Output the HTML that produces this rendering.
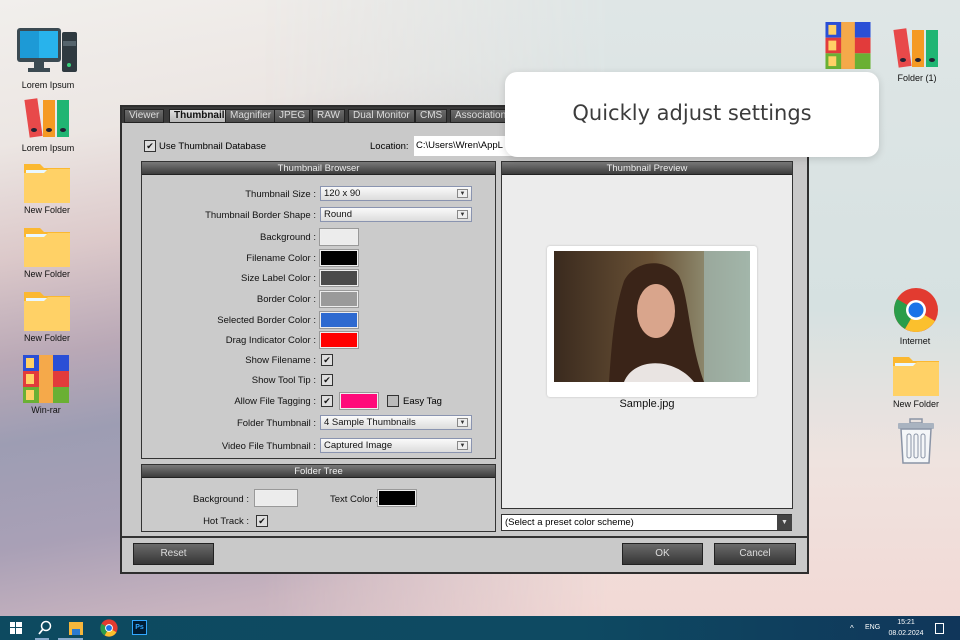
<!DOCTYPE html>
<html><head><meta charset="utf-8"><style>
*{margin:0;padding:0;box-sizing:border-box}
body{width:960px;height:640px;overflow:hidden;position:relative;font-family:"Liberation Sans",Arial,sans-serif;
background:linear-gradient(170deg,#f1efec 0%,#ece6e3 18%,#dcc9ca 32%,#b9a8b6 45%,#9d9db3 55%,#a9a0b6 68%,#c9b4bf 80%,#dcc6ca 100%);}
.bgr{position:absolute;right:0;top:0;width:700px;height:616px;background:linear-gradient(180deg,#dfe6e6 0%,#d6e1e1 50%,#efe3df 75%,#f2d9d5 100%);
-webkit-mask-image:linear-gradient(90deg,transparent 0%,rgba(0,0,0,.5) 25%,#000 50%);mask-image:linear-gradient(90deg,transparent 0%,rgba(0,0,0,.5) 25%,#000 50%);}
.a{position:absolute}
.lbl{position:absolute;font-size:9px;color:#111;text-align:center;width:80px}
.dlg{position:absolute;left:120px;top:105px;width:689px;height:469px;background:#c9c9c9;border:2px solid #2e2e2e}
.tabs{position:absolute;left:0;top:0;width:100%;height:16px;background:#3a3a3a}
.tab{position:absolute;top:2px;height:14px;font-size:10px;color:#ddd;background:linear-gradient(#6a6a6a,#4a4a4a);border:1px solid #222;padding:0 4px;line-height:12px}
.tab.on{background:linear-gradient(#e0e0e0,#b8b8b8);color:#111;font-weight:bold}
.grp{position:absolute;border:1px solid #333;background:#cbcbcb}
.gh{position:absolute;left:0;top:0;right:0;height:13px;background:linear-gradient(#7a7a7a,#3c3c3c);color:#eee;font-size:9.5px;text-align:center;line-height:13px;border-bottom:1px solid #222}
.r{position:absolute;font-size:9.5px;color:#111;text-align:right;width:200px}
.sw{position:absolute;width:38px;height:16px;border:1px solid #eee;outline:1px solid #999}
.sel{position:absolute;height:15px;background:linear-gradient(#fafafa,#dcdcdc);border:1px solid #8a94b0;font-size:9.5px;line-height:13px;padding-left:3px;color:#111}
.sel i{position:absolute;right:3px;top:2px;width:11px;height:9px;border:1px solid #888;background:#eee;font-style:normal;font-size:6px;line-height:8px;text-align:center;color:#333}
.cb{position:absolute;width:12px;height:12px;border:1px solid #333;background:#ddd;font-size:9px;line-height:10px;text-align:center;color:#111}
.btn{position:absolute;height:22px;background:linear-gradient(#6a6a6a,#363636);border:1px solid #222;color:#ddd;font-size:10px;text-align:center;line-height:20px}
</style></head><body>
<div class="bgr"></div>
<svg class="a" style="left:16px;top:27px" width="62" height="47" viewBox="0 0 62 47"><rect x="1" y="1" width="44" height="34" rx="3" fill="#3b4a52"/><rect x="4" y="4" width="19" height="27" fill="#1d9ad6"/><rect x="23" y="4" width="19" height="27" fill="#28b3ec"/><rect x="18" y="35" width="10" height="7" fill="#3b4a52"/><rect x="12" y="41" width="22" height="4" fill="#3b4a52"/><rect x="46" y="5" width="15" height="40" rx="2" fill="#2f3a40"/><rect x="47" y="14" width="13" height="5" fill="#55646c"/><circle cx="53" cy="38" r="2" fill="#3ad07a"/></svg>
<div class="lbl" style="left:8px;top:80px">Lorem Ipsum</div>
<svg class="a" style="left:24px;top:97px" width="48" height="42" viewBox="0 0 48 42"><rect x="3" y="2" width="13" height="38" fill="#e8494a" transform="rotate(-8 9 21)"/><rect x="19" y="3" width="12" height="37" fill="#f59a23"/><rect x="33" y="3" width="12" height="37" fill="#20b573"/><ellipse cx="10" cy="33" rx="3" ry="2" fill="#223"/><ellipse cx="25" cy="33" rx="3" ry="2" fill="#223"/><ellipse cx="39" cy="33" rx="3" ry="2" fill="#223"/></svg>
<div class="lbl" style="left:8px;top:143px">Lorem Ipsum</div>
<svg class="a" style="left:24px;top:160px" width="46" height="43" viewBox="0 0 46 43"><path d="M0 4h16l4 4h26v35H0z" fill="#fbb830"/><rect x="2" y="10" width="42" height="5" fill="#e9f8ff"/><path d="M0 13h20l4-4h22v34H0z" fill="#ffd166"/></svg>
<div class="lbl" style="left:7px;top:205px">New Folder</div>
<svg class="a" style="left:24px;top:224px" width="46" height="43" viewBox="0 0 46 43"><path d="M0 4h16l4 4h26v35H0z" fill="#fbb830"/><rect x="2" y="10" width="42" height="5" fill="#e9f8ff"/><path d="M0 13h20l4-4h22v34H0z" fill="#ffd166"/></svg>
<div class="lbl" style="left:7px;top:269px">New Folder</div>
<svg class="a" style="left:24px;top:288px" width="46" height="43" viewBox="0 0 46 43"><path d="M0 4h16l4 4h26v35H0z" fill="#fbb830"/><rect x="2" y="10" width="42" height="5" fill="#e9f8ff"/><path d="M0 13h20l4-4h22v34H0z" fill="#ffd166"/></svg>
<div class="lbl" style="left:7px;top:333px">New Folder</div>
<svg class="a" style="left:23px;top:355px" width="46" height="48" viewBox="0 0 46 48"><rect width="46" height="16" fill="#2a4fd6"/><rect y="16" width="46" height="16" fill="#e23b3b"/><rect y="32" width="46" height="16" fill="#6ab034"/><rect x="16" width="14" height="48" fill="#f5a94a"/><rect x="3" y="3" width="8" height="10" fill="#ffd166"/><rect x="3" y="19" width="8" height="10" fill="#ffd166"/><rect x="3" y="35" width="8" height="10" fill="#ffd166"/></svg>
<div class="lbl" style="left:6px;top:405px">Win-rar</div>
<svg class="a" style="left:825px;top:22px" width="46" height="47" viewBox="0 0 46 48"><rect width="46" height="16" fill="#2a4fd6"/><rect y="16" width="46" height="16" fill="#e23b3b"/><rect y="32" width="46" height="16" fill="#6ab034"/><rect x="16" width="14" height="48" fill="#f5a94a"/><rect x="3" y="3" width="8" height="10" fill="#ffd166"/><rect x="3" y="19" width="8" height="10" fill="#ffd166"/><rect x="3" y="35" width="8" height="10" fill="#ffd166"/></svg>
<svg class="a" style="left:893px;top:27px" width="48" height="42" viewBox="0 0 48 42"><rect x="3" y="2" width="13" height="38" fill="#e8494a" transform="rotate(-8 9 21)"/><rect x="19" y="3" width="12" height="37" fill="#f59a23"/><rect x="33" y="3" width="12" height="37" fill="#20b573"/><ellipse cx="10" cy="33" rx="3" ry="2" fill="#223"/><ellipse cx="25" cy="33" rx="3" ry="2" fill="#223"/><ellipse cx="39" cy="33" rx="3" ry="2" fill="#223"/></svg>
<div class="lbl" style="left:877px;top:73px">Folder (1)</div>
<svg class="a" style="left:893px;top:287px" width="46" height="46" viewBox="0 0 46 46"><circle cx="23" cy="23" r="22" fill="#e23b30"/><path d="M23 23L4 12A22 22 0 0 0 12 42z" fill="#2a9d4a"/><path d="M23 23L12 42A22 22 0 0 0 42 34z" fill="#fbc02d"/><circle cx="23" cy="23" r="10" fill="#fff"/><circle cx="23" cy="23" r="7.5" fill="#1a73e8"/></svg>
<div class="lbl" style="left:875px;top:336px">Internet</div>
<svg class="a" style="left:893px;top:353px" width="46" height="43" viewBox="0 0 46 43"><path d="M0 4h16l4 4h26v35H0z" fill="#fbb830"/><rect x="2" y="10" width="42" height="5" fill="#e9f8ff"/><path d="M0 13h20l4-4h22v34H0z" fill="#ffd166"/></svg>
<div class="lbl" style="left:876px;top:399px">New Folder</div>
<svg class="a" style="left:897px;top:418px" width="38" height="46" viewBox="0 0 38 46"><rect x="13" y="1" width="12" height="4" fill="none" stroke="#8a94a6" stroke-width="1.5"/><rect x="1" y="5" width="36" height="6" rx="1" fill="#a9b3c0"/><path d="M4 11h30l-2 34H6z" fill="#f4f6f8" stroke="#8a94a6" stroke-width="1.5"/><rect x="10" y="16" width="4" height="24" rx="2" fill="none" stroke="#8a94a6"/><rect x="17" y="16" width="4" height="24" rx="2" fill="none" stroke="#8a94a6"/><rect x="24" y="16" width="4" height="24" rx="2" fill="none" stroke="#8a94a6"/></svg>

<div class="dlg">
<div class="tabs">
<div class="tab" style="left:2px">Viewer</div>
<div class="tab on" style="left:47px">Thumbnail</div>
<div class="tab" style="left:103px">Magnifier</div>
<div class="tab" style="left:152px">JPEG</div>
<div class="tab" style="left:190px">RAW</div>
<div class="tab" style="left:226px">Dual Monitor</div>
<div class="tab" style="left:293px">CMS</div>
<div class="tab" style="left:328px">Association</div>
</div>
<div class="cb" style="left:22px;top:33px">✔</div>
<div class="a" style="left:37px;top:34px;font-size:9.5px">Use Thumbnail Database</div>
<div class="a" style="left:248px;top:34px;font-size:9.5px">Location:</div>
<div class="a" style="left:292px;top:29px;width:100px;height:20px;background:#fff;font-size:9.5px;padding:4px 2px">C:\Users\Wren\AppL</div>

<div class="grp" style="left:19px;top:54px;width:355px;height:298px"><div class="gh">Thumbnail Browser</div></div>
<div class="grp" style="left:19px;top:357px;width:355px;height:68px"><div class="gh">Folder Tree</div></div>
<div class="grp" style="left:379px;top:54px;width:292px;height:348px;background:#ececec"><div class="gh">Thumbnail Preview</div></div>

<div class="r" style="left:-6px;top:82px">Thumbnail Size :</div>
<div class="sel" style="left:198px;top:79px;width:152px">120 x 90<i>▼</i></div>
<div class="r" style="left:-6px;top:103px">Thumbnail Border Shape :</div>
<div class="sel" style="left:198px;top:100px;width:152px">Round<i>▼</i></div>
<div class="r" style="left:-6px;top:125px">Background :</div><div class="sw" style="left:198px;top:122px;background:#ececec"></div>
<div class="r" style="left:-6px;top:146px">Filename Color :</div><div class="sw" style="left:198px;top:143px;background:#000"></div>
<div class="r" style="left:-6px;top:166px">Size Label Color :</div><div class="sw" style="left:198px;top:163px;background:#4a4a4a"></div>
<div class="r" style="left:-6px;top:187px">Border Color :</div><div class="sw" style="left:198px;top:184px;background:#9a9a9a"></div>
<div class="r" style="left:-6px;top:208px">Selected Border Color :</div><div class="sw" style="left:198px;top:205px;background:#2e6ad0"></div>
<div class="r" style="left:-6px;top:228px">Drag Indicator Color :</div><div class="sw" style="left:198px;top:225px;background:#ff0000"></div>
<div class="r" style="left:-6px;top:248px">Show Filename :</div><div class="cb" style="left:199px;top:247px">✔</div>
<div class="r" style="left:-6px;top:268px">Show Tool Tip :</div><div class="cb" style="left:199px;top:267px">✔</div>
<div class="r" style="left:-6px;top:289px">Allow File Tagging :</div><div class="cb" style="left:199px;top:288px">✔</div>
<div class="sw" style="left:218px;top:286px;background:#ff0a7a"></div>
<div class="cb" style="left:265px;top:288px;background:#bbb"></div>
<div class="a" style="left:281px;top:289px;font-size:9.5px">Easy Tag</div>
<div class="r" style="left:-6px;top:311px">Folder Thumbnail :</div>
<div class="sel" style="left:198px;top:308px;width:152px">4 Sample Thumbnails<i>▼</i></div>
<div class="r" style="left:-6px;top:334px">Video File Thumbnail :</div>
<div class="sel" style="left:198px;top:331px;width:152px">Captured Image<i>▼</i></div>

<div class="r" style="left:-73px;top:387px">Background :</div><div class="sw" style="left:133px;top:383px;background:#ececec;width:42px"></div>
<div class="r" style="left:56px;top:387px">Text Color :</div><div class="sw" style="left:256px;top:383px;background:#000"></div>
<div class="r" style="left:-73px;top:409px">Hot Track :</div><div class="cb" style="left:134px;top:408px">✔</div>

<div class="a" style="left:425px;top:139px;width:210px;height:151px;background:#fff;border-radius:3px;box-shadow:0 0 2px #bbb"></div>
<svg class="a" style="left:432px;top:144px" width="196" height="131" viewBox="0 0 196 131"><defs><linearGradient id="g" x1="0" x2="1"><stop offset="0" stop-color="#3a2a1e"/><stop offset=".5" stop-color="#6a5236"/><stop offset="1" stop-color="#a9b59a"/></linearGradient></defs><rect width="196" height="131" fill="url(#g)"/><rect x="150" y="0" width="46" height="131" fill="#9fb7b0" opacity=".7"/><path d="M55 131C58 90 60 60 70 30 80 10 110 5 125 25 135 45 135 90 150 131z" fill="#3a2418"/><ellipse cx="102" cy="60" rx="19" ry="27" fill="#d9a58c"/><path d="M70 131c10-25 50-25 70 0z" fill="#e9e4e2"/></svg>
<div class="a" style="left:379px;top:291px;width:292px;text-align:center;font-size:11px;color:#111">Sample.jpg</div>

<div class="a" style="left:379px;top:407px;width:291px;height:17px;background:#fff;border:1px solid #333;font-size:9.5px;line-height:15px;padding-left:3px">(Select a preset color scheme)</div>
<div class="a" style="left:655px;top:408px;width:15px;height:15px;background:#444;color:#ddd;font-size:7px;text-align:center;line-height:15px">▼</div>

<div class="a" style="left:0;top:429px;width:100%;height:2px;background:#333"></div>
<div class="btn" style="left:11px;top:436px;width:81px">Reset</div>
<div class="btn" style="left:500px;top:436px;width:81px">OK</div>
<div class="btn" style="left:592px;top:436px;width:82px">Cancel</div>
</div>

<div class="a" style="left:505px;top:72px;width:374px;height:85px;background:#fff;border-radius:12px;box-shadow:0 2px 8px rgba(0,0,0,.15);font-family:'DejaVu Sans',sans-serif;font-size:21px;color:#3c3c3c;text-align:center;line-height:83px">Quickly adjust settings</div>

<div class="a" style="left:0;top:616px;width:960px;height:24px;background:linear-gradient(90deg,#0d4a60,#0e4a62 60%,#10365a)"></div>
<svg class="a" style="left:10px;top:622px" width="12" height="12"><rect width="5" height="5" fill="#fff"/><rect x="6" width="6" height="5" fill="#fff"/><rect y="6" width="5" height="6" fill="#fff"/><rect x="6" y="6" width="6" height="6" fill="#fff"/></svg>
<svg class="a" style="left:37px;top:620px" width="16" height="16"><circle cx="9" cy="6" r="4.5" fill="none" stroke="#fff" stroke-width="1.5"/><path d="M6 9L2 14" stroke="#fff" stroke-width="1.8"/></svg>
<svg class="a" style="left:69px;top:620px" width="14" height="16"><rect y="2" width="14" height="13" fill="#f6b73c"/><rect x="3" y="9" width="8" height="6" fill="#2b7ad0"/></svg>
<div class="a" style="left:35px;top:638px;width:14px;height:2px;background:#8ac"></div>
<div class="a" style="left:58px;top:638px;width:14px;height:2px;background:#8ac"></div>
<div class="a" style="left:69px;top:638px;width:14px;height:2px;background:#8ac"></div>
<svg class="a" style="left:100px;top:619px" width="18" height="18" viewBox="0 0 46 46"><circle cx="23" cy="23" r="22" fill="#e23b30"/><path d="M23 23L4 12A22 22 0 0 0 12 42z" fill="#2a9d4a"/><path d="M23 23L12 42A22 22 0 0 0 42 34z" fill="#fbc02d"/><circle cx="23" cy="23" r="10" fill="#fff"/><circle cx="23" cy="23" r="7.5" fill="#1a73e8"/></svg>
<div class="a" style="left:132px;top:620px;width:15px;height:15px;background:#001d34;border:1px solid #31a8ff;color:#31a8ff;font-size:7px;font-weight:bold;text-align:center;line-height:13px">Ps</div>
<div class="a" style="left:850px;top:624px;color:#fff;font-size:8px">^</div>
<div class="a" style="left:865px;top:624px;color:#fff;font-size:7px">ENG</div>
<div class="a" style="left:886px;top:617px;width:40px;color:#fff;font-size:7px;text-align:center;line-height:11px">15:21<br>08.02.2024</div>
<div class="a" style="left:935px;top:623px;width:9px;height:11px;border:1px solid #fff"></div>
</body></html>
